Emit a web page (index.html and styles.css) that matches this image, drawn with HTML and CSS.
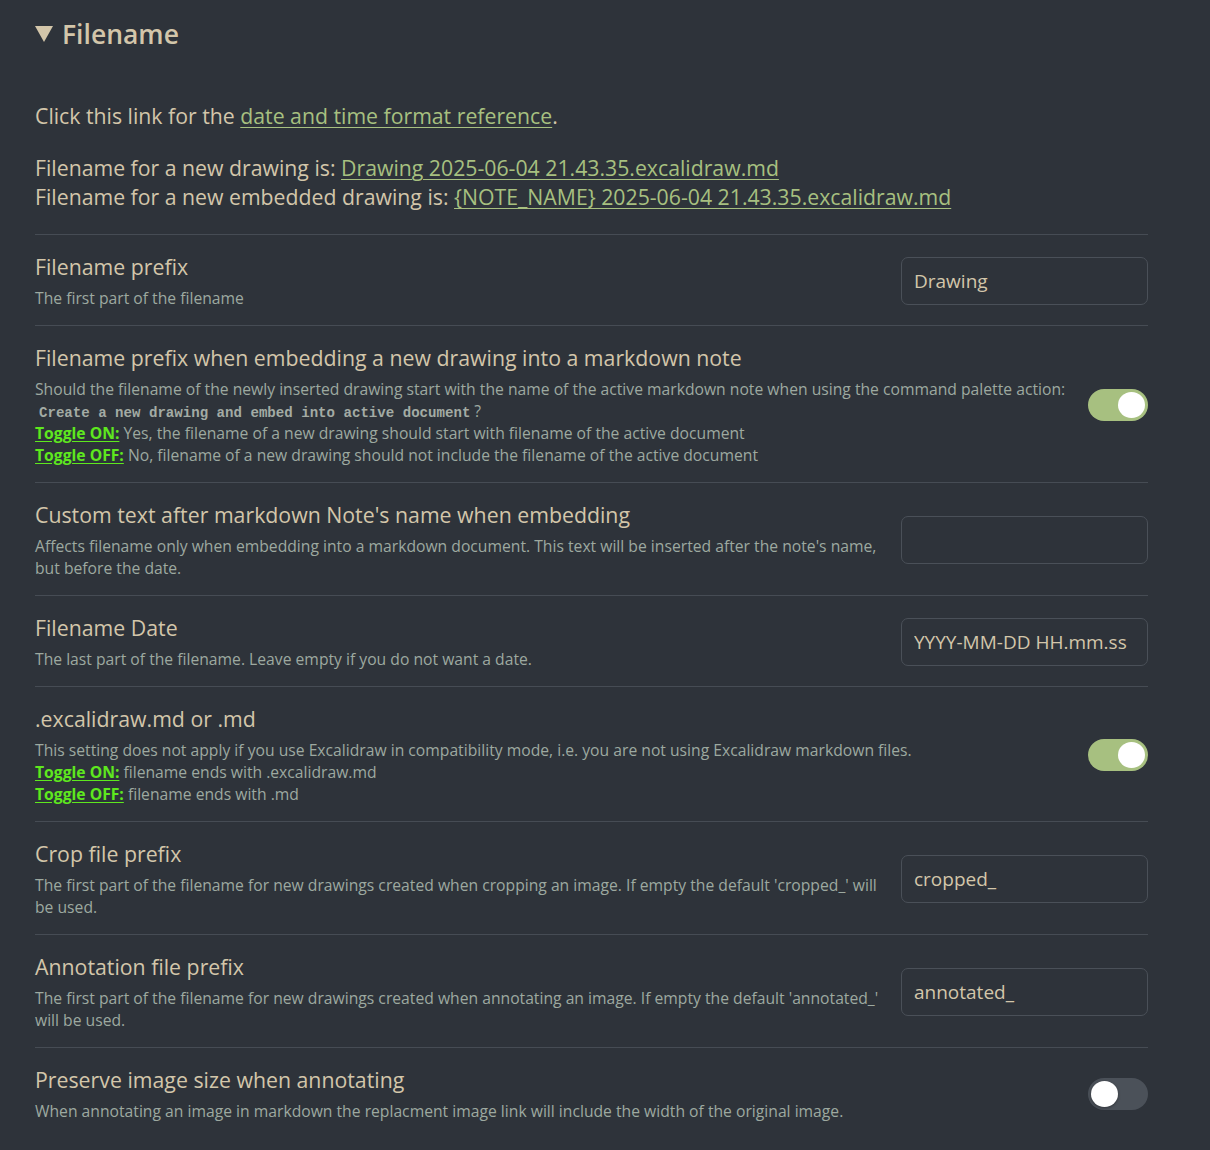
FILE: index.html
```html
<!DOCTYPE html>
<html lang="en">
<head>
<meta charset="utf-8">
<title>Filename settings</title>
<link rel="stylesheet" href="styles.css">
</head>
<body>
<div class="page">
  <h2 class="section-title">
    <svg class="caret" width="18" height="16" viewBox="0 0 18 16"><polygon points="0,0 18,0 9,16" fill="#d3c6aa"/></svg>
    <span>Filename</span>
  </h2>

  <p class="intro">Click this link for the <a href="#" class="link">date and time format reference</a>.</p>
  <p class="intro names">Filename for a new drawing is: <a href="#" class="link">Drawing 2025-06-04 21.43.35.excalidraw.md</a><br>Filename for a new embedded drawing is: <a href="#" class="link">{NOTE_NAME} 2025-06-04 21.43.35.excalidraw.md</a></p>

  <div class="setting">
    <div class="info">
      <div class="name">Filename prefix</div>
      <div class="desc">The first part of the filename</div>
    </div>
    <div class="control"><input class="text-input" type="text" value="Drawing"></div>
  </div>

  <div class="setting">
    <div class="info">
      <div class="name">Filename prefix when embedding a new drawing into a markdown note</div>
      <div class="desc"><span class="nowrap">Should the filename of the newly inserted drawing start with the name of the active markdown note when using the command palette action:</span><br><code>Create a new drawing and embed into active document</code>?<br><a href="#" class="toggle-label">Toggle ON:</a> Yes, the filename of a new drawing should start with filename of the active document<br><a href="#" class="toggle-label">Toggle OFF:</a> No, filename of a new drawing should not include the filename of the active document</div>
    </div>
    <div class="control"><div class="toggle on"><div class="knob"></div></div></div>
  </div>

  <div class="setting">
    <div class="info">
      <div class="name">Custom text after markdown Note's name when embedding</div>
      <div class="desc">Affects filename only when embedding into a markdown document. This text will be inserted after the note's name, but before the date.</div>
    </div>
    <div class="control"><input class="text-input" type="text" value=""></div>
  </div>

  <div class="setting">
    <div class="info">
      <div class="name">Filename Date</div>
      <div class="desc">The last part of the filename. Leave empty if you do not want a date.</div>
    </div>
    <div class="control"><input class="text-input" type="text" value="YYYY-MM-DD HH.mm.ss"></div>
  </div>

  <div class="setting">
    <div class="info">
      <div class="name">.excalidraw.md or .md</div>
      <div class="desc">This setting does not apply if you use Excalidraw in compatibility mode, i.e. you are not using Excalidraw markdown files.<br><a href="#" class="toggle-label">Toggle ON:</a> filename ends with .excalidraw.md<br><a href="#" class="toggle-label">Toggle OFF:</a> filename ends with .md</div>
    </div>
    <div class="control"><div class="toggle on"><div class="knob"></div></div></div>
  </div>

  <div class="setting">
    <div class="info">
      <div class="name">Crop file prefix</div>
      <div class="desc">The first part of the filename for new drawings created when cropping an image. If empty the default 'cropped_' will be used.</div>
    </div>
    <div class="control"><input class="text-input" type="text" value="cropped_"></div>
  </div>

  <div class="setting">
    <div class="info">
      <div class="name">Annotation file prefix</div>
      <div class="desc">The first part of the filename for new drawings created when annotating an image. If empty the default 'annotated_' will be used.</div>
    </div>
    <div class="control"><input class="text-input" type="text" value="annotated_"></div>
  </div>

  <div class="setting">
    <div class="info">
      <div class="name">Preserve image size when annotating</div>
      <div class="desc">When annotating an image in markdown the replacment image link will include the width of the original image.</div>
    </div>
    <div class="control"><div class="toggle"><div class="knob"></div></div></div>
  </div>
</div>
</body>
</html>
```

FILE: styles.css
```css
html, body {
  margin: 0;
  padding: 0;
  background: #2e333a;
}

body {
  font-family: "Open Sans", "Noto Sans", sans-serif;
  color: #d3c6aa;
  height: 1150px;
  overflow: hidden;
}

.page {
  padding: 17px 62px 0 35px;
}

.section-title {
  margin: 0;
  display: flex;
  align-items: center;
  gap: 9px;
  font-size: 26.5px;
  font-weight: 600;
  line-height: 34px;
  height: 34px;
}

.caret {
  display: block;
  margin-top: 0;
}

.intro {
  margin: 50px 0 0 0;
  font-size: 21.25px;
  line-height: 29px;
}

.intro.names {
  margin-top: 23px;
  margin-bottom: 23px;
}

.link {
  color: #a7c080;
  text-decoration: underline;
  text-underline-offset: 3px;
  text-decoration-thickness: 1px;
}

.setting {
  display: flex;
  align-items: center;
  border-top: 1px solid #464c54;
  padding: 18px 0 16px 0;
}

.info {
  flex: 1;
  min-width: 0;
  padding-right: 19px;
}

.name {
  font-size: 21.3px;
  line-height: 28px;
  color: #d3c6aa;
}

.desc {
  margin-top: 6px;
  font-size: 15.7px;
  line-height: 22px;
  color: #9da9a0;
}

.nowrap {
  white-space: nowrap;
}

code {
  font-family: "Liberation Mono", "DejaVu Sans Mono", monospace;
  font-size: 14.1px;
  line-height: 1;
  font-weight: 700;
  color: #a3aba4;
  padding: 0 4px;
}

.toggle-label {
  color: #5ee81e;
  font-weight: 700;
  text-decoration: underline;
  text-underline-offset: 2px;
}

.control {
  flex: none;
  display: flex;
  justify-content: flex-end;
}

.text-input {
  box-sizing: border-box;
  width: 247px;
  height: 48px;
  border: 1px solid #4a5058;
  border-radius: 7px;
  background: transparent;
  color: #d3c6aa;
  font-family: "Open Sans", "Noto Sans", sans-serif;
  font-size: 19px;
  padding: 0 12px;
  outline: none;
}

.toggle {
  position: relative;
  width: 60px;
  height: 32px;
  border-radius: 16px;
  background: #4b5159;
}

.toggle .knob {
  position: absolute;
  top: 3px;
  left: 3px;
  width: 27px;
  height: 26px;
  border-radius: 50%;
  background: #ffffff;
  box-shadow: 0 1px 3px rgba(0, 0, 0, 0.35);
}

.toggle.on {
  background: #a7c080;
}

.toggle.on .knob {
  left: auto;
  right: 3px;
  box-shadow: none;
}
```
